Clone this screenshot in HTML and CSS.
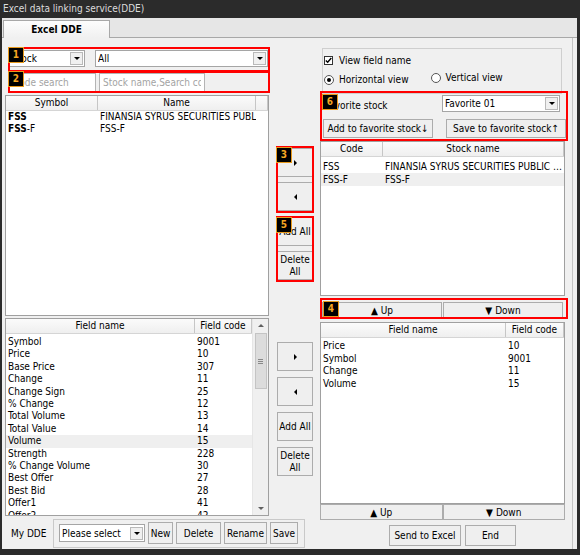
FILE: index.html
```html
<!DOCTYPE html>
<html lang="en">
<head>
    <meta charset="UTF-8">
    <title>Excel data linking service(DDE)</title>
    <link rel="stylesheet" href="styles.css">
</head>
<body>

<div class="window">
    <div class="titlebar">Excel data linking service(DDE)</div>
    <div class="tabs"><div class="tab">Excel DDE</div></div>

    <div class="content">

        <!-- Left column: search + stock list + field list -->
        <div class="col-left">
            <div class="mark mark-1">
                <span class="badge">1</span>
                <div class="combo combo-type"><span class="combo-text">Stock</span><span class="combo-btn"></span></div>
                <div class="combo combo-market"><span class="combo-text">All</span><span class="combo-btn"></span></div>
            </div>

            <div class="mark mark-2">
                <span class="badge">2</span>
                <input class="search search-code" type="text" placeholder="Code search">
                <input class="search search-name" type="text" placeholder="Stock name,Search code">
            </div>

            <div class="list list-symbols">
                <div class="list-head cols-symbols">
                    <div class="hcell">Symbol</div>
                    <div class="hcell">Name</div>
                    <div class="hcell"></div>
                </div>
                <div class="list-row cols-symbols"><div><b>FSS</b></div><div>FINANSIA SYRUS SECURITIES PUBLIC COMPANY</div></div>
                <div class="list-row cols-symbols"><div><b>FSS</b>-F</div><div>FSS-F</div></div>
            </div>

            <div class="list list-fields">
                <div class="list-main">
                    <div class="list-head cols-fields">
                        <div class="hcell">Field name</div>
                        <div class="hcell">Field code</div>
                    </div>
                    <div class="list-rows">
                        <div class="list-row cols-fields"><div>Symbol</div><div>9001</div></div>
                        <div class="list-row cols-fields"><div>Price</div><div>10</div></div>
                        <div class="list-row cols-fields"><div>Base Price</div><div>307</div></div>
                        <div class="list-row cols-fields"><div>Change</div><div>11</div></div>
                        <div class="list-row cols-fields"><div>Change Sign</div><div>25</div></div>
                        <div class="list-row cols-fields"><div>% Change</div><div>12</div></div>
                        <div class="list-row cols-fields"><div>Total Volume</div><div>13</div></div>
                        <div class="list-row cols-fields"><div>Total Value</div><div>14</div></div>
                        <div class="list-row cols-fields selected"><div>Volume</div><div>15</div></div>
                        <div class="list-row cols-fields"><div>Strength</div><div>228</div></div>
                        <div class="list-row cols-fields"><div>% Change Volume</div><div>30</div></div>
                        <div class="list-row cols-fields"><div>Best Offer</div><div>27</div></div>
                        <div class="list-row cols-fields"><div>Best Bid</div><div>28</div></div>
                        <div class="list-row cols-fields"><div>Offer1</div><div>41</div></div>
                        <div class="list-row cols-fields"><div>Offer2</div><div>42</div></div>
                    </div>
                </div>
                <div class="vscroll">
                    <span class="arrow-up"></span>
                    <span class="thumb"><span class="grip"></span></span>
                    <span class="arrow-down"></span>
                </div>
            </div>

            <div class="mydde">
                <span class="mydde-label">My DDE</span>
                <div class="mydde-group">
                    <div class="combo combo-dde"><span class="combo-text">Please select</span><span class="combo-btn"></span></div>
                    <button class="btn btn-new">New</button>
                    <button class="btn btn-delete">Delete</button>
                    <button class="btn btn-rename">Rename</button>
                    <button class="btn btn-save">Save</button>
                </div>
            </div>
        </div>

        <!-- Middle column: move buttons -->
        <div class="col-mid">
            <div class="mark mark-3">
                <span class="badge">3</span>
                <button class="btn btn-move"><span class="tri-right"></span></button>
                <button class="btn btn-move"><span class="tri-left"></span></button>
            </div>
            <div class="mark mark-5">
                <span class="badge">5</span>
                <button class="btn btn-move">Add All</button>
                <button class="btn btn-move">Delete<br>All</button>
            </div>

            <div class="mid-lower">
                <button class="btn btn-move"><span class="tri-right"></span></button>
                <button class="btn btn-move"><span class="tri-left"></span></button>
                <button class="btn btn-move">Add All</button>
                <button class="btn btn-move">Delete<br>All</button>
            </div>
        </div>

        <!-- Right column: favourites + selected lists -->
        <div class="col-right">
            <div class="options">
                <div class="opt-row">
                    <span class="check"><svg width="7" height="7" viewBox="0 0 7 7"><path d="M0.8 3.4 L2.7 5.3 L6.3 1" fill="none" stroke="#000" stroke-width="1.4"/></svg></span>
                    <span>View field name</span>
                </div>
                <div class="opt-row opt-radios">
                    <span class="radio checked"></span><span class="radio-label">Horizontal view</span>
                    <span class="radio radio-2"></span><span class="radio-label radio-label-2">Vertical view</span>
                </div>
            </div>

            <div class="mark mark-6">
                <span class="badge">6</span>
                <div class="fav-row">
                    <span class="fav-label">Favorite stock</span>
                    <div class="combo combo-fav"><span class="combo-text">Favorite 01</span><span class="combo-btn"></span></div>
                </div>
                <div class="fav-row fav-buttons">
                    <button class="btn btn-add-fav">Add to favorite stock&#8595;</button>
                    <button class="btn btn-save-fav">Save to favorite stock&#8593;</button>
                </div>
            </div>

            <div class="list list-stocks">
                <div class="list-head cols-stocks">
                    <div class="hcell">Code</div>
                    <div class="hcell">Stock name</div>
                </div>
                <div class="list-rows">
                    <div class="list-row cols-stocks"><div>FSS</div><div class="ellipsis">FINANSIA SYRUS SECURITIES PUBLIC COMPANY</div></div>
                    <div class="list-row cols-stocks selected"><div>FSS-F</div><div>FSS-F</div></div>
                </div>
            </div>

            <div class="mark mark-4 updown">
                <span class="badge">4</span>
                <button class="btn btn-ud">&#9650; Up</button>
                <button class="btn btn-ud">&#9660; Down</button>
            </div>

            <div class="list list-selected">
                <div class="list-head cols-selected">
                    <div class="hcell">Field name</div>
                    <div class="hcell">Field code</div>
                </div>
                <div class="list-rows">
                    <div class="list-row cols-selected"><div>Price</div><div>10</div></div>
                    <div class="list-row cols-selected"><div>Symbol</div><div>9001</div></div>
                    <div class="list-row cols-selected"><div>Change</div><div>11</div></div>
                    <div class="list-row cols-selected"><div>Volume</div><div>15</div></div>
                </div>
            </div>

            <div class="updown updown-bottom">
                <button class="btn btn-ud">&#9650; Up</button>
                <button class="btn btn-ud">&#9660; Down</button>
            </div>

            <div class="actions">
                <button class="btn btn-send">Send to Excel</button>
                <button class="btn btn-end">End</button>
            </div>
        </div>

    </div>
</div>

</body>
</html>
```

FILE: styles.css
```css
* {
    box-sizing: border-box;
}

body {
    margin: 0;
    background-color: #2b2b2b;
    font-family: "DejaVu Sans Condensed", "Liberation Sans", sans-serif;
    font-size: 10px;
    color: #000;
}

/* Window frame */
.window {
    width: 580px;
    height: 555px;
    display: flex;
    flex-direction: column;
    padding: 0 3px 6px 2px;
}

.titlebar {
    height: 18px;
    line-height: 17px;
    padding-left: 1px;
    color: #dcdcdc;
}

.tabs {
    height: 20px;
    background-color: #e6e6e6;
    border-bottom: 1px solid #a8a8a8;
    padding-left: 1px;
    display: flex;
    align-items: flex-end;
}

.tab {
    width: 107px;
    height: 18px;
    margin-bottom: -1px;
    background: linear-gradient(#fdfdfd, #f0f0f0);
    border: 1px solid #a8a8a8;
    border-bottom: none;
    font-weight: bold;
    text-align: center;
    line-height: 17px;
}

.content {
    flex: 1;
    display: flex;
    background-color: #f0f0f0;
    padding-left: 3px;
}

/* Red annotation frames with numbered badges */
.mark {
    position: relative;
}

.mark::after {
    content: "";
    position: absolute;
    border: 2px solid #ff0000;
    pointer-events: none;
}

.badge {
    position: absolute;
    z-index: 2;
    width: 16px;
    height: 16px;
    background-color: #000;
    border: 1px solid #e89a1c;
    color: #f5a623;
    font-weight: bold;
    font-size: 10px;
    line-height: 14px;
    text-align: center;
}

.mark-1::after { top: -3px; left: -1px; right: -2px; bottom: -5px; }
.mark-1 .badge { top: -3px; left: -1px; }
.mark-2::after { top: -2px; left: -1px; right: -2px; bottom: -1px; }
.mark-2 .badge { top: -2px; left: -1px; }
.mark-3::after { top: -2px; left: -1px; right: -1px; bottom: -2px; }
.mark-3 .badge { top: -1px; left: -1px; }
.mark-5::after { top: -1px; left: -1px; right: -1px; bottom: -2px; }
.mark-5 .badge { top: 0; left: -1px; }
.mark-6::after { top: -4px; left: -2px; right: -2px; bottom: -3px; }
.mark-6 .badge { top: -1px; left: 0; }
.mark-4::after { top: -4px; left: -2px; right: -5px; bottom: -1px; }
.mark-4 .badge { top: -1px; left: 1px; }

/* Basic controls */
.btn {
    font-family: inherit;
    font-size: 10px;
    color: #000;
    background-color: #efefef;
    border: 1px solid #acacac;
    padding: 0;
    margin: 0;
}

.combo {
    display: flex;
    align-items: center;
    background-color: #fff;
    border: 1px solid #a5a5a5;
    padding-left: 2px;
}

.combo-text {
    flex: 1;
    white-space: nowrap;
    overflow: hidden;
}

.combo-btn {
    width: 13px;
    height: 13px;
    margin-right: 1px;
    background-color: #f0f0f0;
    border: 1px solid #b9b9b9;
    display: flex;
    align-items: center;
    justify-content: center;
}

.combo-btn::before {
    content: "";
    border-left: 3px solid transparent;
    border-right: 3px solid transparent;
    border-top: 3px solid #000;
}

.search {
    font-family: inherit;
    font-size: 10px;
    height: 19px;
    border: 1px solid #b4b4b4;
    background-color: #fff;
    padding: 0 3px;
    outline: none;
}

.search::placeholder {
    color: #a3a3a3;
}

/* Lists */
.list {
    background-color: #fff;
    border: 1px solid #a0a0a0;
    overflow: hidden;
}

.list-head {
    display: grid;
    height: 15px;
    background: linear-gradient(#fbfbfb, #efefef);
    border-bottom: 1px solid #d5d5d5;
}

.hcell {
    text-align: center;
    line-height: 14px;
    border-right: 1px solid #c6c6c6;
    white-space: nowrap;
    overflow: hidden;
}

.list-row {
    display: grid;
    white-space: nowrap;
}

.list-row > div {
    overflow: hidden;
    padding-left: 2px;
}

.list-row.selected {
    background-color: #efefef;
}

.ellipsis {
    text-overflow: ellipsis;
}

/* Left column */
.col-left {
    width: 266px;
    display: flex;
    flex-direction: column;
}

.mark-1 {
    display: flex;
    margin: 12px 0 0 4px;
    width: 259px;
    height: 17px;
}

.combo-type {
    width: 76px;
}

.combo-market {
    width: 173px;
    margin-left: 10px;
}

.mark-2 {
    display: flex;
    margin: 6px 0 0 4px;
    width: 259px;
    height: 19px;
}

.search-code {
    width: 87px;
}

.search-name {
    width: 106px;
    margin-left: 3px;
}

.list-symbols {
    margin-top: 3px;
    width: 264px;
    height: 221px;
}

.cols-symbols {
    grid-template-columns: 92px 158px 1fr;
}

.list-symbols .list-row {
    line-height: 12px;
}

.list-fields {
    margin-top: 2px;
    width: 264px;
    height: 198px;
    display: flex;
}

.list-main {
    flex: 1;
    overflow: hidden;
}

.cols-fields {
    grid-template-columns: 189px 1fr;
}

.list-fields .list-rows {
    padding-top: 2px;
}

.list-fields .list-row {
    line-height: 12.4px;
}

.vscroll {
    width: 16px;
    background-color: #f0f0f0;
    border-left: 1px solid #e6e6e6;
    display: flex;
    flex-direction: column;
    align-items: center;
}

.arrow-up,
.arrow-down {
    width: 0;
    height: 0;
    border-left: 3px solid transparent;
    border-right: 3px solid transparent;
}

.arrow-up {
    margin-top: 5px;
    border-bottom: 3px solid #606060;
}

.arrow-down {
    margin-top: auto;
    margin-bottom: 5px;
    border-top: 3px solid #606060;
}

.thumb {
    margin-top: 6px;
    width: 12px;
    height: 56px;
    background-color: #dcdcdc;
    border: 1px solid #c4c4c4;
    display: flex;
    align-items: center;
    justify-content: center;
}

.grip {
    width: 5px;
    height: 5px;
    border-top: 1px solid #888;
    border-bottom: 1px solid #888;
    background: linear-gradient(#888, #888) center / 5px 1px no-repeat;
}

.mydde {
    margin-top: 2px;
    width: 300px;
    height: 30px;
    display: flex;
    align-items: center;
}

.mydde-label {
    width: 48px;
    padding-left: 6px;
}

.mydde-group {
    flex: 1;
    height: 29px;
    border: 1px solid #c9c9c9;
    display: flex;
    align-items: center;
    padding-left: 5px;
}

.combo-dde {
    width: 86px;
    height: 18px;
}

.mydde-group .btn {
    height: 22px;
    margin-left: 3px;
}

.btn-new { width: 25px; }
.btn-delete { width: 45px; margin-left: 4px; }
.btn-rename { width: 43px; }
.btn-save { width: 28px; }

/* Middle column */
.col-mid {
    width: 36px;
    margin-left: 6px;
    display: flex;
    flex-direction: column;
    padding-top: 110px;
}

.btn-move {
    width: 36px;
    height: 29px;
    line-height: 12px;
    display: flex;
    align-items: center;
    justify-content: center;
}

.mark-3,
.mark-5,
.mid-lower {
    display: flex;
    flex-direction: column;
    gap: 5px;
}

.mark-5 {
    margin-top: 6px;
}

.mid-lower {
    margin-top: 62px;
    gap: 6px;
}

.tri-right {
    border-top: 3px solid transparent;
    border-bottom: 3px solid transparent;
    border-left: 3px solid #000;
}

.tri-left {
    border-top: 3px solid transparent;
    border-bottom: 3px solid transparent;
    border-right: 3px solid #000;
}

/* Right column */
.col-right {
    width: 257px;
    margin-left: 3px;
    display: flex;
    flex-direction: column;
    border-right: 1px solid #c4c4c4;
}

.options {
    margin: 10px 0 0 6px;
    width: 240px;
    height: 46px;
    border: 1px solid #cfcfcf;
    padding: 6px 0 0 1px;
}

.opt-row {
    display: flex;
    align-items: center;
    height: 11px;
}

.check {
    width: 9px;
    height: 9px;
    margin-right: 6px;
    border: 1px solid #333;
    background-color: #fff;
    display: flex;
    align-items: center;
    justify-content: center;
}

.opt-radios {
    margin-top: 8px;
    position: relative;
}

.radio {
    width: 10px;
    height: 10px;
    border: 1px solid #555;
    border-radius: 50%;
    background-color: #fff;
    margin-right: 5px;
    display: flex;
    align-items: center;
    justify-content: center;
}

.radio.checked::before {
    content: "";
    width: 4px;
    height: 4px;
    border-radius: 50%;
    background-color: #000;
}

.radio-2 {
    margin-left: 22px;
    margin-top: -4px;
}

.radio-label {
    line-height: 11px;
}

.radio-label-2 {
    margin-top: -4px;
}

.mark-6 {
    margin: 1px 0 0 6px;
    width: 244px;
}

.fav-row {
    display: flex;
    align-items: center;
    height: 17px;
}

.fav-label {
    width: 120px;
    padding-left: 3px;
    margin-top: 4px;
}

.combo-fav {
    width: 118px;
    height: 17px;
}

.fav-buttons {
    margin-top: 7px;
    height: 19px;
    justify-content: space-between;
}

.fav-buttons .btn {
    height: 19px;
}

.btn-add-fav { width: 110px; margin-left: 1px; }
.btn-save-fav { width: 120px; }

.list-stocks {
    margin: 3px 0 0 4px;
    width: 245px;
    height: 155px;
}

.cols-stocks {
    grid-template-columns: 62px 181px 1fr;
}

.list-stocks .list-rows {
    padding-top: 3px;
}

.list-stocks .list-row {
    line-height: 13px;
}

.updown {
    display: flex;
}

.mark-4 {
    margin: 6px 0 0 6px;
    width: 241px;
    height: 16px;
    gap: 1px;
}

.btn-ud {
    flex: 1;
    height: 16px;
    font-size: 10px;
}

.list-selected {
    margin: 4px 0 0 4px;
    width: 245px;
    height: 182px;
}

.cols-selected {
    grid-template-columns: 185px 58px 1fr;
}

.list-selected .list-rows {
    padding-top: 2px;
}

.list-selected .list-row {
    line-height: 12.6px;
}

.updown-bottom {
    margin-left: 4px;
    width: 245px;
    height: 16px;
}

.actions {
    margin: 5px 0 0 73px;
    display: flex;
    gap: 4px;
}

.actions .btn {
    height: 21px;
}

.btn-send { width: 72px; }
.btn-end { width: 51px; }
```
